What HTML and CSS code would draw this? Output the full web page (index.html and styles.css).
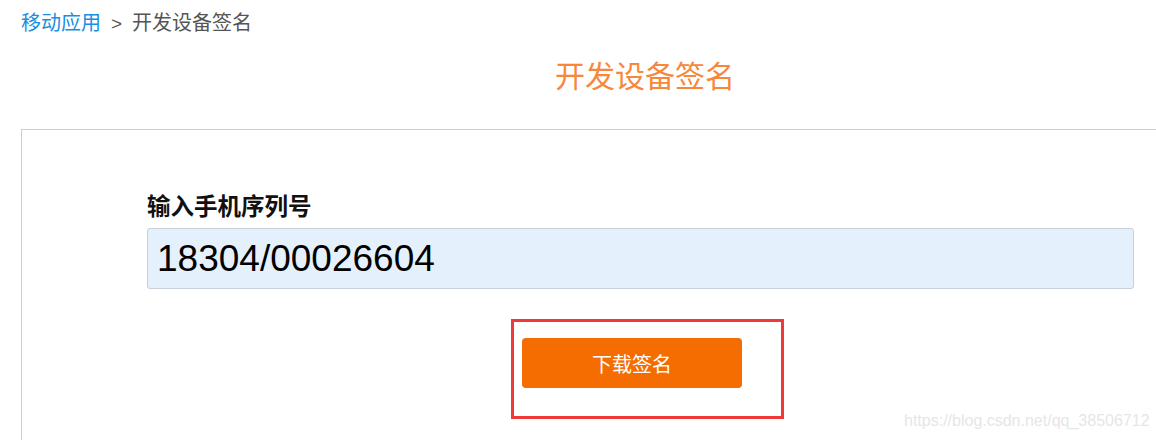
FILE: index.html
```html
<!DOCTYPE html>
<html lang="zh">
<head>
<meta charset="utf-8">
<title>开发设备签名</title>
<link rel="stylesheet" href="styles.css">
</head>
<body>
<div class="page">
  <div class="breadcrumb"><a class="crumb-link" href="#">移动应用</a><span class="sep">&gt;</span><span class="crumb-current">开发设备签名</span></div>
  <h1 class="title">开发设备签名</h1>
  <div class="card">
    <div class="label">输入手机序列号</div>
    <div class="input">18304/00026604</div>
    <div class="highlight">
      <button class="btn" type="button">下载签名</button>
    </div>
  </div>
</div>
<div class="watermark">https://blog.csdn.net/qq_38506712</div>
</body>
</html>
```

FILE: styles.css
```css
html, body {
  margin: 0;
  padding: 0;
  background: #fff;
  overflow: hidden;
  width: 1156px;
  height: 440px;
}
body {
  font-family: "Noto Sans CJK SC", "Liberation Sans", sans-serif;
  position: relative;
}
.page {
  width: 1156px;
  height: 440px;
  padding-left: 21px;
  box-sizing: border-box;
}
.breadcrumb {
  height: 44px;
  line-height: 44px;
  font-size: 20px;
  color: #555;
  white-space: nowrap;
}
.crumb-link {
  color: #1a8ee0;
  text-decoration: none;
}
.sep {
  margin: 0 10px 0 10px;
  font-family: "Liberation Sans", sans-serif;
  font-size: 19px;
}
.title {
  margin: 0 0 25px 0;
  height: 60px;
  line-height: 60px;
  font-size: 30px;
  font-weight: normal;
  color: #f7883a;
  text-align: center;
  padding-left: 113px;
  box-sizing: border-box;
}
.card {
  border: 1px solid #cfcfcf;
  border-right: none;
  border-bottom: none;
  height: 311px;
  padding: 59px 0 0 125px;
  box-sizing: border-box;
}
.label {
  font-size: 23.5px;
  line-height: 32px;
  font-weight: bold;
  color: #111;
}
.input {
  margin-top: 7px;
  width: 987px;
  height: 61px;
  box-sizing: border-box;
  background: #e4f0fb;
  border: 1px solid #c9d0d8;
  border-radius: 3px;
  padding-left: 9px;
  font-family: "Liberation Sans", sans-serif;
  font-size: 37px;
  line-height: 59px;
  color: #000;
}
.highlight {
  margin: 30px 0 0 364px;
  width: 273px;
  height: 100px;
  box-sizing: border-box;
  border: 3px solid #f03a3a;
  padding: 16px 0 0 8px;
}
.btn {
  display: block;
  width: 220px;
  height: 50px;
  border: none;
  border-radius: 4px;
  background: #f56c00;
  color: #fff;
  font-family: "Noto Sans CJK SC", sans-serif;
  font-size: 20px;
  padding: 0;
  cursor: pointer;
}
.watermark {
  position: absolute;
  left: 904px;
  top: 411px;
  font-family: "Liberation Sans", sans-serif;
  font-size: 16px;
  line-height: 20px;
  color: #e6e6e6;
  white-space: nowrap;
}
```
